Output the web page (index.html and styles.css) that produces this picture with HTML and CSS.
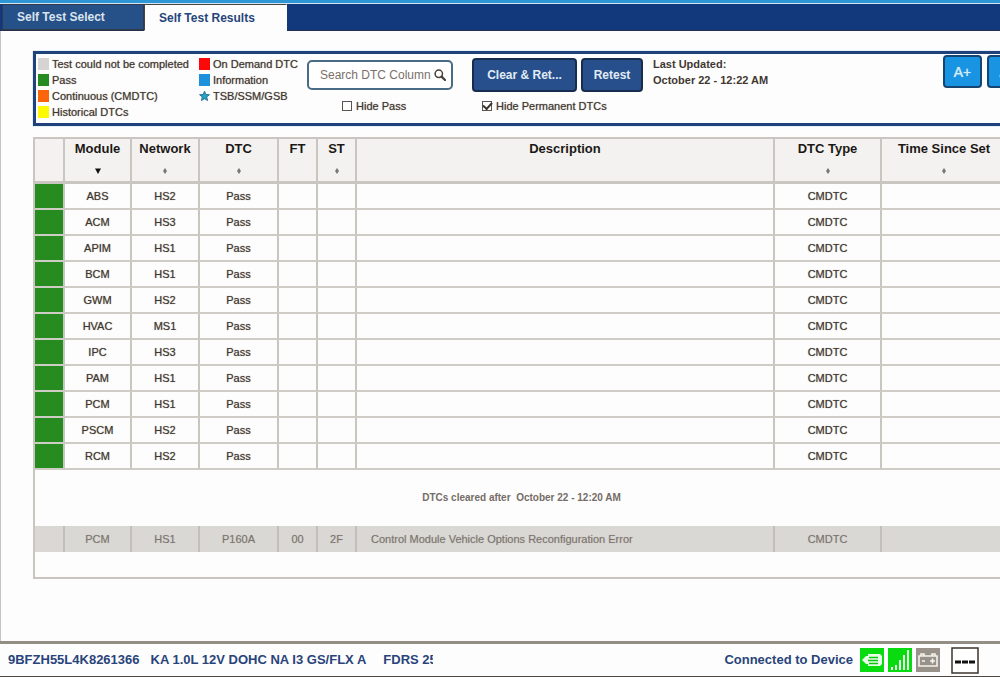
FILE: index.html
```html
<!DOCTYPE html>
<html lang="en">
<head>
<meta charset="utf-8">
<title>Self Test Results</title>
<link rel="stylesheet" href="styles.css">
</head>
<body>
<nav class="tabs">
  <button class="tab" type="button">Self Test Select</button>
  <button class="tab tab-active" type="button">Self Test Results</button>
</nav>

<main class="workspace">
  <section class="panel">
    <ul class="legend">
      <li><span class="swatch incomplete"></span>Test could not be completed</li>
      <li><span class="swatch pass"></span>Pass</li>
      <li><span class="swatch continuous"></span>Continuous (CMDTC)</li>
      <li><span class="swatch historical"></span>Historical DTCs</li>
      <li><span class="swatch demand"></span>On Demand DTC</li>
      <li><span class="swatch info"></span>Information</li>
      <li><svg class="star" viewBox="0 0 12 12"><path d="M6 .8 7.5 4.3 11.4 4.6 8.4 7.1 9.4 11 6 8.9 2.6 11 3.6 7.1.6 4.6 4.5 4.3Z" fill="#1fa3c4" stroke="#2a6f8c"/></svg>TSB/SSM/GSB</li>
    </ul>

    <div class="search-group">
      <div class="search">
        <input type="text" placeholder="Search DTC Column" aria-label="Search DTC Column">
        <svg viewBox="0 0 12 12"><circle cx="4.8" cy="4.8" r="3.7" fill="none" stroke="#4a3f38" stroke-width="1.5"/><path d="M7.6 7.6 11 11" stroke="#4a3f38" stroke-width="2.2" stroke-linecap="round"/></svg>
      </div>
      <label class="check"><input type="checkbox">Hide Pass</label>
    </div>

    <div class="action-group">
      <div class="actions">
        <button class="action clear" type="button">Clear &amp; Ret...</button>
        <button class="action retest" type="button">Retest</button>
      </div>
      <label class="check permanent"><input type="checkbox" checked>Hide Permanent DTCs</label>
    </div>

    <p class="updated">Last Updated:<br>October 22 - 12:22 AM</p>

    <div class="zoom">
      <button type="button">A+</button>
      <button type="button">A-</button>
    </div>
  </section>

  <div class="results">
    <table>
      <colgroup>
        <col class="c-status"><col class="c-module"><col class="c-network"><col class="c-dtc"><col class="c-short"><col class="c-short"><col><col class="c-type"><col class="c-time">
      </colgroup>
      <thead>
        <tr>
          <th></th>
          <th>Module<svg class="sort" viewBox="0 0 8 8"><path d="M1 1.5H7L4 7Z" fill="#111"/></svg></th>
          <th>Network<svg class="sort" viewBox="0 0 8 8"><path d="M4 1 6 4 4 7 2 4Z" fill="#777"/></svg></th>
          <th>DTC<svg class="sort" viewBox="0 0 8 8"><path d="M4 1 6 4 4 7 2 4Z" fill="#777"/></svg></th>
          <th>FT</th>
          <th>ST<svg class="sort" viewBox="0 0 8 8"><path d="M4 1 6 4 4 7 2 4Z" fill="#777"/></svg></th>
          <th>Description</th>
          <th>DTC Type<svg class="sort" viewBox="0 0 8 8"><path d="M4 1 6 4 4 7 2 4Z" fill="#777"/></svg></th>
          <th>Time Since Set<svg class="sort" viewBox="0 0 8 8"><path d="M4 1 6 4 4 7 2 4Z" fill="#777"/></svg></th>
        </tr>
      </thead>
      <tbody>
        <tr><td class="pass"></td><td>ABS</td><td>HS2</td><td>Pass</td><td></td><td></td><td></td><td>CMDTC</td><td></td></tr>
        <tr><td class="pass"></td><td>ACM</td><td>HS3</td><td>Pass</td><td></td><td></td><td></td><td>CMDTC</td><td></td></tr>
        <tr><td class="pass"></td><td>APIM</td><td>HS1</td><td>Pass</td><td></td><td></td><td></td><td>CMDTC</td><td></td></tr>
        <tr><td class="pass"></td><td>BCM</td><td>HS1</td><td>Pass</td><td></td><td></td><td></td><td>CMDTC</td><td></td></tr>
        <tr><td class="pass"></td><td>GWM</td><td>HS2</td><td>Pass</td><td></td><td></td><td></td><td>CMDTC</td><td></td></tr>
        <tr><td class="pass"></td><td>HVAC</td><td>MS1</td><td>Pass</td><td></td><td></td><td></td><td>CMDTC</td><td></td></tr>
        <tr><td class="pass"></td><td>IPC</td><td>HS3</td><td>Pass</td><td></td><td></td><td></td><td>CMDTC</td><td></td></tr>
        <tr><td class="pass"></td><td>PAM</td><td>HS1</td><td>Pass</td><td></td><td></td><td></td><td>CMDTC</td><td></td></tr>
        <tr><td class="pass"></td><td>PCM</td><td>HS1</td><td>Pass</td><td></td><td></td><td></td><td>CMDTC</td><td></td></tr>
        <tr><td class="pass"></td><td>PSCM</td><td>HS2</td><td>Pass</td><td></td><td></td><td></td><td>CMDTC</td><td></td></tr>
        <tr><td class="pass"></td><td>RCM</td><td>HS2</td><td>Pass</td><td></td><td></td><td></td><td>CMDTC</td><td></td></tr>
        <tr class="cleared"><td colspan="9">DTCs cleared after&nbsp; October 22 - 12:20 AM</td></tr>
        <tr class="old"><td></td><td>PCM</td><td>HS1</td><td>P160A</td><td>00</td><td>2F</td><td class="description">Control Module Vehicle Options Reconfiguration Error</td><td>CMDTC</td><td></td></tr>
      </tbody>
    </table>
  </div>
</main>

<footer class="status-bar">
  <span>9BFZH55L4K8261366</span>
  <span class="engine">KA 1.0L 12V DOHC NA I3 GS/FLX A</span>
  <span class="version">FDRS 25</span>
  <span class="connection">Connected to Device</span>
  <div class="indicators">
    <svg viewBox="0 0 24 24"><path fill="#08dc10" d="M0 0h24v24H0z"/><path d="M2 12 6 8h2V6h12l2 2v8l-2 2H8v-2H6Z" fill="#e8ffe8"/><path d="M9 9.500h9M8 12.500h10M9 15.500h9" stroke="#08c810" stroke-width="1.500"/></svg>
    <svg viewBox="0 0 24 24"><path fill="#08dc10" d="M0 0h24v24H0z"/><path d="M3 19h2v3H3zM7 17h2v5H7zM11 12h2v10h-2zM15 7h2v15h-2zM19 2h2v20h-2z" fill="#e8ffe8"/></svg>
    <svg viewBox="0 0 24 24"><path fill="#98928a" d="M0 0h24v24H0z"/><path d="M3 8h18v10H3zM5 8V6h3v2M16 8V6h3v2M6 13h3M14 13h5M16.500 10.500v5" fill="none" stroke="#f5f3ef" stroke-width="1.600"/></svg>
  </div>
  <svg class="dashes" viewBox="0 0 28 27"><path d="M1 1h26v25H1z" fill="#fff" stroke="#3c3431" stroke-width="1.500"/><path d="M4 15h6M11 15h6M18 15h6" stroke="#111" stroke-width="3"/></svg>
</footer>
</body>
</html>
```
FILE: styles.css
```css
* { box-sizing: border-box; }

body {
  display: flex;
  flex-direction: column;
  min-height: 100vh;
  margin: 0;
  overflow-x: hidden;
  background: #fdfdfd;
  color: #423832;
  font: 11px/16px "Liberation Sans", Arial, sans-serif;
}

button, input { font-family: inherit; }

.tabs {
  display: flex;
  height: 31px;
  padding-left: 2px;
  border-top: 3px solid #2f96d6;
  border-bottom: 1px solid #26304a;
  background: #12397b;
  box-shadow: inset 0 1px #d5e6f5;
}

.tab {
  width: 142px;
  margin-top: 1px;
  padding: 0 0 0 14px;
  border: 1px solid #333a4c;
  background: #265088;
  color: #d9e3ee;
  font-size: 12px;
  font-weight: bold;
  text-align: left;
}

.tab-active {
  width: 143px;
  margin-bottom: -1px;
  border-color: #4a4441 #fdfdfd #fdfdfd #4a4441;
  background: #fdfdfd;
  color: #25457b;
}

.workspace {
  flex: 1;
  padding: 20px 0 20px 32px;
  border-left: 1px solid #c4c4c4;
  overflow: hidden;
}

.panel {
  display: flex;
  align-items: flex-start;
  height: 75px;
  margin-right: -44px;
  padding: 1px 15px 0 2px;
  border: 3px solid #20427a;
  box-shadow: 0 0 1px #7fa3d8;
}

.legend {
  display: grid;
  grid-template-columns: 161px 108px;
  grid-template-rows: repeat(4, 16px);
  grid-auto-flow: column;
  margin: 0;
  padding: 1px 0 0;
  list-style: none;
  text-shadow: 0 0 1px #8a817b;
}

.legend li {
  display: flex;
  align-items: center;
  gap: 3px;
  white-space: nowrap;
}

.swatch, .star { width: 11px; height: 12px; }
.incomplete { background: #d5d4d2; }
.pass { background: #278c20; }
.continuous { background: #fb640b; }
.historical { background: #fdf900; }
.demand { background: #fc0808; }
.info { background: #1d91dc; }

.search-group {
  width: 146px;
  margin: 5px 19px 0 0;
}

.search {
  display: flex;
  align-items: center;
  height: 30px;
  padding: 0 5px 0 11px;
  border: 2px solid #496c86;
  border-radius: 5px;
  background: #fff;
}

.search input {
  flex: 1;
  min-width: 0;
  padding: 0;
  border: 0;
  background: none;
  font-size: 12px;
}

.search input::placeholder { color: #7b7069; opacity: 1; }
.search svg { width: 12px; height: 12px; }

.check {
  display: flex;
  align-items: center;
  gap: 4px;
  margin-top: 8px;
  padding-left: 35px;
  text-shadow: 0 0 1px #8a817b;
}

.permanent { margin-top: 6px; padding-left: 10px; }

.check input {
  display: grid;
  place-items: center;
  appearance: none;
  width: 10px;
  height: 10px;
  margin: 0;
  border: 1px solid #5b5450;
  background: #fff;
}

.check input:checked::before {
  content: "";
  width: 7px;
  height: 4px;
  margin-bottom: 2px;
  border: solid #3b332e;
  border-width: 0 0 2px 2px;
  transform: rotate(-48deg);
}

.action-group { margin: 3px 10px 0 0; }
.actions { display: flex; gap: 4px; }

.action {
  height: 34px;
  padding: 0;
  border: 2px solid #182d4e;
  border-radius: 4px;
  background: #264f8b;
  color: #e2ebf5;
  font-size: 12px;
  font-weight: bold;
}

.clear { width: 105px; }
.retest { width: 62px; }

.updated {
  margin: 1px 0 0;
  font-weight: bold;
}

.zoom {
  display: flex;
  gap: 5px;
  margin-left: auto;
}

.zoom button {
  width: 39px;
  height: 33px;
  padding: 0;
  border: 2px solid #16466f;
  border-radius: 4px;
  background: #1894e3;
  color: #d3ecfb;
  font-size: 14px;
  text-shadow: 0 0 1px #d3ecfb;
}

.results {
  margin: 11px -10px 0 0;
  padding-bottom: 25px;
  border: 2px solid #c9c6c0;
}

table {
  width: 100%;
  border-spacing: 0;
  table-layout: fixed;
}

.c-status { width: 30px; }
.c-module { width: 67px; }
.c-network { width: 68px; }
.c-dtc { width: 79px; }
.c-short { width: 39px; }
.c-type { width: 107px; }
.c-time { width: 126px; }

th {
  height: 45px;
  padding: 2px 0 0;
  border-right: 2px solid #c9c6c0;
  border-bottom: 3px solid #c9c6c0;
  background: #f3f2f1;
  color: #1c1816;
  font-size: 13px;
  line-height: 16px;
  vertical-align: top;
}

.sort {
  display: block;
  width: 8px;
  height: 8px;
  margin: 10px auto 0;
}

td {
  height: 26px;
  padding: 0;
  border-right: 2px solid #c9c6c0;
  border-bottom: 2px solid #cfccc6;
  text-align: center;
  text-shadow: 0 0 1px #8a817b;
}

.cleared td {
  height: 56px;
  border-right: 0;
  border-bottom: 0;
  color: #756c66;
  font-size: 10px;
  font-weight: bold;
  text-shadow: none;
}

.old td {
  border-color: #c3bfba;
  border-bottom: 0;
  background: #dad8d5;
  color: #7c756f;
  text-shadow: 0 0 1px #b0aaa5;
}

.old .description { padding-left: 14px; text-align: left; }

.status-bar {
  display: flex;
  align-items: center;
  gap: 11px;
  height: 36px;
  padding: 0 21px 0 8px;
  border-top: 3px solid #938e85;
  border-bottom: 1px solid #4e4844;
  color: #29447a;
  font-size: 13px;
  font-weight: bold;
  white-space: nowrap;
}

.engine { margin-right: 6px; }
.version { width: 50px; overflow: hidden; }
.connection { margin-left: auto; margin-right: -4px; }
.indicators { display: flex; gap: 4px; }
.indicators svg { width: 24px; height: 24px; }
.dashes { width: 28px; height: 27px; }
```
